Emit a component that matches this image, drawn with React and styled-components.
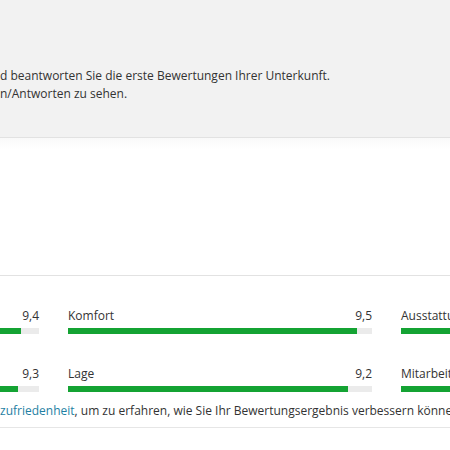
import React from 'react'
import styled, { createGlobalStyle } from 'styled-components'

const GlobalStyle = createGlobalStyle`
  html, body {
    margin: 0;
    padding: 0;
    background: #fff;
    overflow: hidden;
  }
  body {
    font-family: "Open Sans", "Noto Sans", Arial, sans-serif;
    font-size: 12px;
    color: #333;
  }
`

const Page = styled.div`
  width: 450px;
  height: 450px;
  overflow: hidden;
`

const InfoPanel = styled.div`
  background: #f2f2f2;
  height: 138px;
  box-sizing: border-box;
  padding-top: 67px;
  border-bottom: 1px solid #e2e2e2;
`

const InfoText = styled.p`
  margin: 0;
  line-height: 18px;
  white-space: nowrap;
`

const BlankArea = styled.div`
  height: 137px;
  background: linear-gradient(#f9f9f9, #fff 12px);
  border-bottom: 1px solid #e2e2e2;
`

const ScoreSection = styled.div`
  padding-top: 31px;
  height: 152px;
  box-sizing: border-box;
  border-bottom: 1px solid #e6e6e6;
  overflow: hidden;
`

const ScoreGrid = styled.div`
  display: grid;
  grid-template-columns: repeat(3, 304px);
  column-gap: 29px;
  row-gap: 31px;
  margin-left: -265px;
`

const ScoreItem = styled.div`
  display: flex;
  flex-direction: column;
  gap: 3px;
`

const ScoreHead = styled.div`
  display: flex;
  justify-content: space-between;
  line-height: 18px;
`

const Track = styled.div`
  height: 6px;
  background: #ebebeb;
`

const Fill = styled.div`
  height: 100%;
  background: #14a333;
`

const Hint = styled.p`
  margin: 10px 0 0;
  line-height: 18px;
  white-space: nowrap;
`

const HintLink = styled.a`
  color: #1f7fa3;
  text-decoration: none;
`

const scores = [
  { name: 'Sauberkeit', value: 9.4 },
  { name: 'Komfort', value: 9.5 },
  { name: 'Ausstattung', value: 9.3 },
  { name: 'Preis-Leistung', value: 9.3 },
  { name: 'Lage', value: 9.2 },
  { name: 'Mitarbeiter', value: 9.6 },
]

function App() {
  return (
    <Page>
      <GlobalStyle />
      <InfoPanel>
        <InfoText>
          d beantworten Sie die erste Bewertungen Ihrer Unterkunft.
          <br />
          n/Antworten zu sehen.
        </InfoText>
      </InfoPanel>
      <BlankArea />
      <ScoreSection>
        <ScoreGrid>
          {scores.map(s => (
            <ScoreItem key={s.name}>
              <ScoreHead>
                <span>{s.name}</span>
                <span>{s.value.toFixed(1).replace('.', ',')}</span>
              </ScoreHead>
              <Track>
                <Fill style={{ width: `${s.value * 10}%` }} />
              </Track>
            </ScoreItem>
          ))}
        </ScoreGrid>
        <Hint>
          <HintLink href="#">zufriedenheit</HintLink>, um zu erfahren, wie Sie Ihr Bewertungsergebnis verbessern können.
        </Hint>
      </ScoreSection>
    </Page>
  )
}

export default App
